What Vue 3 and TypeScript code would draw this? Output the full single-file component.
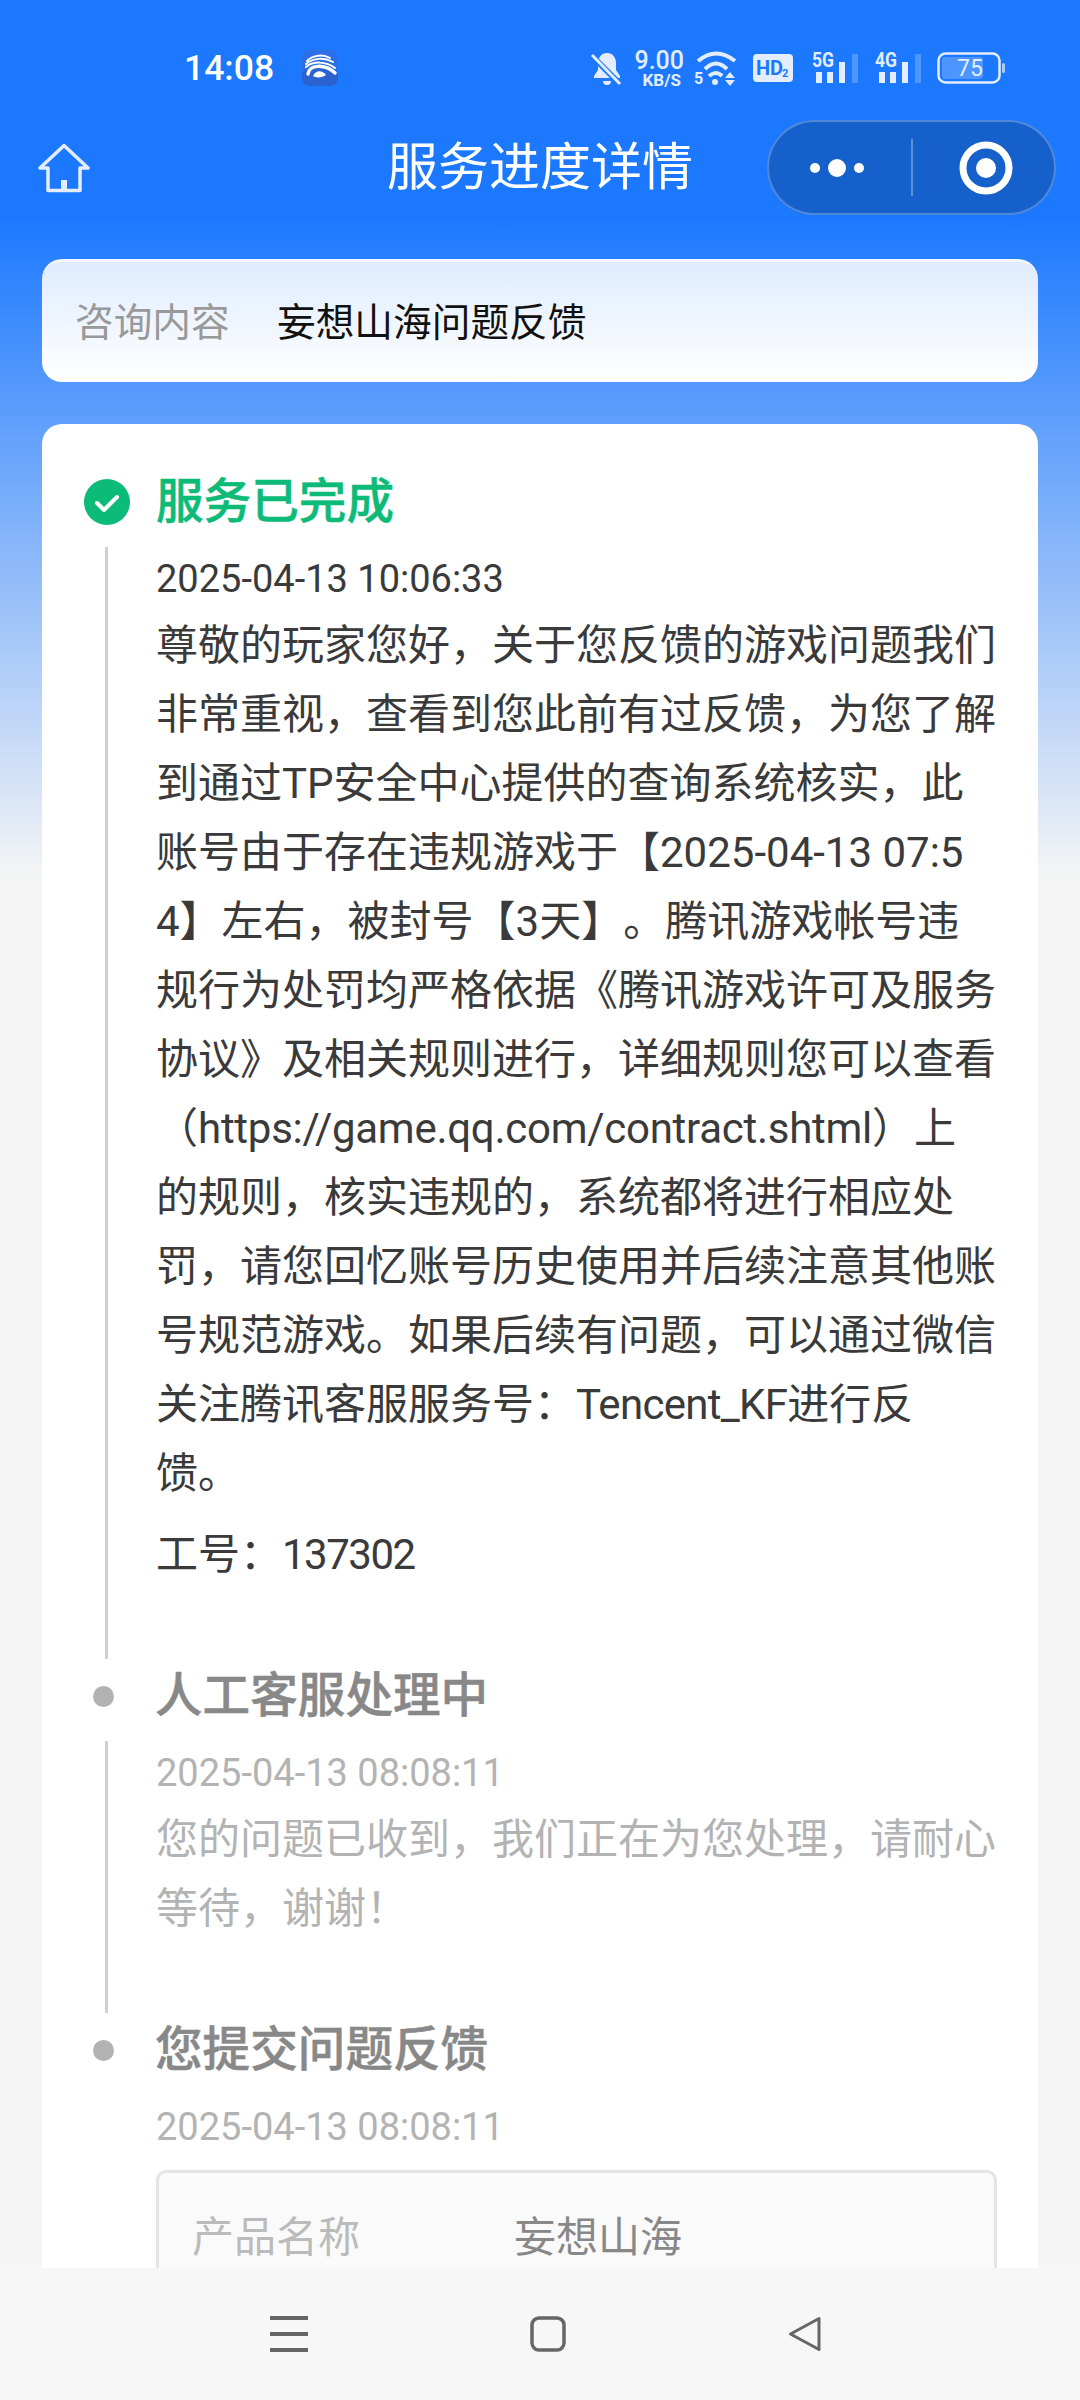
<script setup lang="ts">
interface Step {
  title: string;
  time: string;
  lines: string[];
}

const contentHead =
  "尊敬的玩家您好，关于您反馈的游戏问题我们非常重视，查看到您此前有过反馈，为您了解到通过TP安全中心提供的查询系统核实，此账号由于存在违规游戏于【2025-04-13 07:54】左右，被封号【3天】。腾讯游戏帐号违规行为处罚均严格依据《腾讯游戏许可及服务协议》及相关规则进行，详细规则您可以查看（";
const contentMid =
  "）上的规则，核实违规的，系统都将进行相应处罚，请您回忆账号历史使用并后续注意其他账号规范游戏。如果后续有问题，可以通过微信关注腾讯客服服务号：";

const steps: Step[] = [
  {
    title: "人工客服处理中",
    time: "2025-04-13 08:08:11",
    lines: ["您的问题已收到，我们正在为您处理，请耐心等待，谢谢！"],
  },
];
</script>

<template>
  <div class="page" lang="zh-CN">
    <div class="status">
      <span class="status__time">14:08</span>
      <svg class="status__app" width="36" height="36" viewBox="0 0 36 36">
        <rect width="36" height="36" rx="8" fill="#2c6fe6" />
        <rect y="18" width="36" height="18" rx="8" fill="#2a62cf" />
        <g fill="none" stroke="#fff" stroke-width="2" stroke-linecap="round">
          <path d="M5 11C11 5 21 4 28 8" />
          <path d="M4 14C11 8 22 7 31 12" />
          <path d="M4 17C11 11 24 11 33 18" />
          <path d="M6 24C7 15 22 13 33 23" stroke-width="3.5" />
        </g>
        <path d="M11 26C14 20 20 20 24 25C20 28 14 28 11 26Z" fill="#fff" />
      </svg>
      <div class="status__right">
        <svg class="ic-bell" width="32" height="36" viewBox="0 0 32 36">
          <path d="M16 3c-6 0-9 5-9 10v7l-4 6v2h26v-2l-4-6v-7c0-5-3-10-9-10Z" fill="#e3edff" />
          <path d="M12 31h8a4 4 0 0 1-8 0Z" fill="#e3edff" />
          <path d="M1 6l30 30" stroke="#1b78ff" stroke-width="6" />
          <path d="M1 5l28 29" stroke="#e3edff" stroke-width="3" />
        </svg>
        <div class="speed">
          <span class="speed__num">9.00</span>
          <span class="speed__unit">KB/S</span>
        </div>
        <svg class="ic-wifi" width="46" height="36" viewBox="0 0 46 36">
          <g fill="none" stroke="#e3edff" stroke-width="4">
            <path d="M4 11Q22 -4 41 11" />
            <path d="M11 19Q22 8 33 19" />
            <path d="M15 26Q22 20 28 26" />
          </g>
          <circle cx="21" cy="32" r="3" fill="#e3edff" />
          <text x="0" y="34" class="svg-txt" font-size="16">5</text>
          <path d="M36 22l5 6H31ZM31 30h10l-5 6Z" fill="#e3edff" />
        </svg>
        <svg class="ic-hd" width="40" height="28" viewBox="0 0 40 28">
          <rect width="40" height="28" rx="4" fill="#e3edff" />
          <text x="3" y="21" class="svg-hd" font-size="20">HD</text>
          <text x="29" y="23" class="svg-hd" font-size="11">2</text>
        </svg>
        <svg class="ic-sig" width="46" height="36" viewBox="0 0 46 36">
          <text x="0" y="17" class="svg-txt" font-size="20" textLength="22" lengthAdjust="spacingAndGlyphs">5G</text>
          <rect x="4" y="22" width="6" height="11" fill="#e3edff" />
          <rect x="15" y="22" width="6" height="11" fill="#e3edff" />
          <rect x="27" y="12" width="6" height="21" fill="#e3edff" />
          <rect x="40" y="4" width="6" height="29" fill="#e3edff" opacity=".25" />
        </svg>
        <svg class="ic-sig ic-sig--4g" width="46" height="36" viewBox="0 0 46 36">
          <text x="0" y="17" class="svg-txt" font-size="20" textLength="22" lengthAdjust="spacingAndGlyphs">4G</text>
          <rect x="4" y="22" width="6" height="11" fill="#e3edff" />
          <rect x="15" y="22" width="6" height="11" fill="#e3edff" />
          <rect x="27" y="12" width="6" height="21" fill="#e3edff" />
          <rect x="40" y="4" width="6" height="29" fill="#e3edff" opacity=".25" />
        </svg>
        <svg class="ic-bat" width="68" height="32" viewBox="0 0 68 32">
          <rect x="1.5" y="1.5" width="61" height="29" rx="7" fill="none" stroke="#e3edff" stroke-width="2.5" />
          <rect x="5" y="5" width="41" height="22" rx="3" fill="#e3edff" opacity=".25" />
          <rect x="65" y="11" width="3" height="10" rx="1.5" fill="#e3edff" opacity=".7" />
          <text x="33" y="24" text-anchor="middle" class="svg-bat" font-size="23">75</text>
        </svg>
      </div>
    </div>

    <div class="nav">
      <svg class="nav__home" width="52" height="50" viewBox="0 0 52 50">
        <path
          d="M26 2.5L50 25H42V47.5H10V25H2Z"
          fill="none"
          stroke="#e3edff"
          stroke-width="3.5"
          stroke-linejoin="round"
        />
        <rect x="23" y="37" width="6" height="10" fill="#e3edff" />
      </svg>
      <div class="nav__title">服务进度详情</div>
      <div class="capsule">
        <div class="capsule__cell capsule__cell--more">
          <span class="dot dot--s"></span>
          <span class="dot dot--l"></span>
          <span class="dot dot--s"></span>
        </div>
        <i class="capsule__line"></i>
        <div class="capsule__cell capsule__cell--close">
          <svg width="54" height="54" viewBox="0 0 54 54">
            <circle cx="27" cy="27" r="23" fill="none" stroke="#fff" stroke-width="7" />
            <circle cx="27" cy="27" r="10" fill="#fff" />
          </svg>
        </div>
      </div>
    </div>

    <div class="ask">
      <span class="ask__label">咨询内容</span>
      <span class="ask__value">妄想山海问题反馈</span>
    </div>

    <div class="card">
      <div class="step__head">
        <svg class="step__ok" width="46" height="46" viewBox="0 0 46 46">
          <circle cx="23" cy="23" r="23" fill="#0dbb79" />
          <path
            d="M13 24l7 7 13-13"
            fill="none"
            stroke="#fff"
            stroke-width="4"
            stroke-linecap="round"
            stroke-linejoin="round"
          />
        </svg>
        <h3 class="step__title step__title--ok">服务已完成</h3>
      </div>
      <div class="step__body">
        <div class="step__time">2025-04-13 10:06:33</div>
        <p class="step__text">
          {{ contentHead }}<span class="url">https://game.qq.com/contract.shtml</span>{{ contentMid }}<span class="brand">Tencent_KF</span>进行反馈。
        </p>
        <p class="step__text step__text--staff">工号：<span class="staff-no">137302</span></p>
      </div>

      <template v-for="step in steps" :key="step.title">
        <div class="step__head">
          <i class="step__dot"></i>
          <h3 class="step__title">{{ step.title }}</h3>
        </div>
        <div class="step__body step__body--muted">
          <div class="step__time">{{ step.time }}</div>
          <p v-for="line in step.lines" :key="line" class="step__text">{{ line }}</p>
        </div>
      </template>

      <div class="step__head">
        <i class="step__dot"></i>
        <h3 class="step__title">您提交问题反馈</h3>
      </div>
      <div class="step__body step__body--muted step__body--last">
        <div class="step__time">2025-04-13 08:08:11</div>
        <div class="form">
          <div class="form__row">
            <span class="form__label">产品名称</span>
            <span class="form__value">妄想山海</span>
          </div>
        </div>
      </div>
    </div>

    <div class="sysbar">
      <svg width="38" height="36" viewBox="0 0 38 36">
        <path d="M0 2h38M0 18h38M0 34h38" stroke="#666" stroke-width="4" />
      </svg>
      <svg width="36" height="36" viewBox="0 0 36 36">
        <rect x="2" y="2" width="32" height="32" rx="7" fill="none" stroke="#666" stroke-width="3.5" />
      </svg>
      <svg width="34" height="36" viewBox="0 0 34 36">
        <path
          d="M31 2.5V33.5L2.5 18Z"
          fill="none"
          stroke="#666"
          stroke-width="3"
          stroke-linejoin="round"
        />
      </svg>
    </div>
  </div>
</template>

<style scoped>
.page {
  position: relative;
  width: 1080px;
  height: 2400px;
  overflow: hidden;
  background: linear-gradient(180deg, #1b78ff 0, #1b78ff 215px, #f5f5f5 880px);
  font-family: Roboto, "Noto Sans CJK SC", sans-serif;
  color: #3a3a3a;
  text-spacing-trim: space-all;
}
.status {
  display: flex;
  align-items: center;
  height: 120px;
  padding: 16px 75px 0 184px;
  box-sizing: border-box;
  color: #fff;
}
.status__time {
  font-size: 35.5px;
  font-weight: 500;
  line-height: 40px;
}
.status__app {
  margin-left: 28px;
}
.status__right {
  display: flex;
  align-items: center;
  margin-left: auto;
  color: #e3edff;
}
.status__right svg {
  overflow: visible;
}
.speed {
  display: flex;
  flex-direction: column;
  align-items: flex-end;
  width: 50px;
  margin: 0 10px 0 11px;
}
.speed__num {
  font-size: 25px;
  font-weight: 500;
  line-height: 23px;
}
.speed__unit {
  font-size: 17px;
  font-weight: 700;
  line-height: 16px;
  margin-right: 3px;
}
.ic-hd {
  margin-left: 13px;
}
.ic-sig {
  margin-left: 19px;
}
.ic-sig--4g {
  margin-left: 17px;
}
.ic-bat {
  margin-left: 16px;
}
.svg-txt {
  font-family: Roboto, sans-serif;
  font-weight: 700;
  fill: #e3edff;
}
.svg-hd {
  font-family: Roboto, sans-serif;
  font-weight: 700;
  fill: #1b78ff;
}
.svg-bat {
  font-family: Roboto, sans-serif;
  font-weight: 400;
  fill: #e3edff;
}

.nav {
  display: grid;
  grid-template-columns: 1fr auto 1fr;
  align-items: center;
  height: 94px;
  padding: 0 24px;
}
.nav__home {
  margin-left: 14px;
}
.nav__title {
  font-size: 51px;
  line-height: 60px;
  color: #fff;
}
.capsule {
  justify-self: end;
  display: flex;
  align-items: center;
  width: 289px;
  height: 95px;
  box-sizing: border-box;
  background: #1660cc;
  border: 2px solid rgba(255, 255, 255, 0.25);
  border-radius: 48px;
}
.capsule__cell {
  flex: 1;
  display: flex;
  align-items: center;
  justify-content: center;
  gap: 8px;
}
.capsule__cell--more {
  padding-right: 6px;
}
.capsule__cell--close {
  padding-left: 6px;
}
.capsule__line {
  width: 2px;
  height: 57px;
  background: rgba(255, 255, 255, 0.3);
}
.dot {
  border-radius: 50%;
  background: #fff;
}
.dot--s {
  width: 10px;
  height: 10px;
}
.dot--l {
  width: 18px;
  height: 18px;
}

.ask {
  display: flex;
  align-items: center;
  height: 123px;
  margin: 45px 42px 0;
  padding: 0 0 6px 33px;
  box-sizing: border-box;
  background: linear-gradient(180deg, #dfecfe 0%, #ffffff 100%);
  border-top: 3px solid #f2f7ff;
  border-radius: 20px;
  font-size: 38.7px;
}
.ask__label {
  color: #999;
  width: 202px;
}
.ask__value {
  color: #111;
}

.card {
  margin: 42px 42px 0;
  padding: 41px 42px 0;
  background: #fff;
  border-radius: 20px 20px 0 0;
  height: 2000px;
  box-sizing: border-box;
}
.step__head {
  display: flex;
  align-items: center;
  height: 50px;
  padding: 12px 0 20px;
}
.step__ok {
  width: 46px;
  margin-right: 26px;
}
.step__dot {
  width: 21px;
  height: 21px;
  margin: 0 41px 0 9px;
  border-radius: 50%;
  background: #b2b2b2;
  flex: none;
}
.step__title {
  margin: 0;
  font-size: 47.6px;
  line-height: 50px;
  font-weight: 500;
  -webkit-text-stroke: 0.5px currentColor;
  color: #888;
}
.step__title--ok {
  color: #0dbb79;
}
.step__body {
  margin-left: 21px;
  padding: 0 0 70px 48px;
  border-left: 3px solid #cfcfcf;
  width: 841px;
}
.step__body--last {
  border-left-color: transparent;
}
.step__time {
  font-size: 38px;
  line-height: 64px;
}
.step__text {
  margin: 0;
  font-size: 42px;
  line-height: 69px;
  word-break: break-all;
}
.step__text--staff {
  margin-top: 12px;
}
.url {
  letter-spacing: -0.27px;
}
.brand {
  letter-spacing: -0.7px;
}
.staff-no {
  letter-spacing: -1.5px;
}
.step__body--muted {
  color: #b3b3b3;
}
.form {
  margin-top: 11px;
  padding: 30px 33px 120px;
  border: 3px solid #e4e4e4;
  border-radius: 10px;
  background: #fafafa;
}
.form__row {
  display: flex;
  font-size: 42px;
  line-height: 69px;
}
.form__label {
  width: 322px;
  color: #bbb;
}
.form__value {
  color: #888;
}

.sysbar {
  position: absolute;
  left: 0;
  right: 0;
  bottom: 0;
  height: 132px;
  display: flex;
  align-items: center;
  gap: 222px;
  padding-left: 270px;
  box-sizing: border-box;
  background: #f7f7f7;
}
</style>

<style>
html,
body {
  margin: 0;
}
</style>
